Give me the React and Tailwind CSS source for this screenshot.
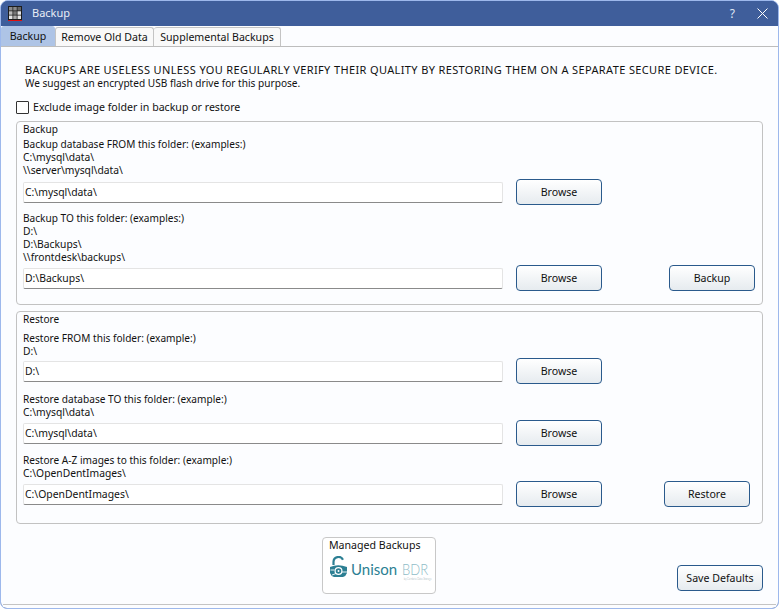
const font = { fontFamily: '"Noto Sans", "Liberation Sans", sans-serif' };

function Btn({ children, className = "" }) {
  return (
    <div className={"h-[26px] pt-[1px] flex items-center justify-center rounded-[4px] border border-[#2a5a8c] bg-gradient-to-b from-[#ffffff] to-[#e6ebef] text-[10.6px] text-[#111] shrink-0 " + className}>
      {children}
    </div>
  );
}

function PathRow({ value, top = "", right = null }) {
  return (
    <div className={"flex items-center h-[26px] pl-[6px] " + top}>
      <div className="w-[480px] h-[21px] flex items-center pl-[1px] bg-white border border-[#e4e4e4] border-b-[#8a8a8a] rounded-[2px] text-[10.4px] leading-[13px] text-[#111]">
        {value}
      </div>
      <Btn className="w-[86px] ml-[13px]">Browse</Btn>
      {right}
    </div>
  );
}

function Lines({ lines, className = "" }) {
  return (
    <div className={"pl-[6px] text-[10.3px] leading-[13px] text-[#111] " + className}>
      {lines.map((l) => (
        <div key={l} className="h-[13px] whitespace-nowrap first:text-[10.1px]">{l}</div>
      ))}
    </div>
  );
}

function Logo() {
  return (
    <div className="flex items-end mt-[4px] ml-[6px]">
      <svg width="19" height="22" viewBox="0 0 19 22" className="shrink-0">
        <path d="M4.5 9V6a5 5 0 0 1 9.5-2.2" fill="none" stroke="#2c7f93" strokeWidth="2.2" />
        <path d="M1 11q8-3.5 17 0v6q-1 3-4 4H5q-3-1-4-4z" fill="#2c7f93" />
        <circle cx="9.5" cy="15" r="3.4" fill="none" stroke="#ffffff" strokeWidth="1.2" />
        <circle cx="9.5" cy="15" r="1" fill="#ffffff" />
        <path d="M1.5 14h4M13 16h5M3 19l4-1.5" stroke="#ffffff" strokeWidth="0.9" fill="none" />
      </svg>
      <span className="ml-[3px] mb-[2px] text-[15px] leading-[14px] text-[#2c7f93] whitespace-nowrap" style={{ fontFamily: '"Lato", sans-serif' }}>Unison</span>
      <span className="ml-[5px] mb-[2px] w-[27px] inline-block relative origin-left scale-x-[0.87] text-[15px] leading-[14px] text-[#8fbcc7] font-light whitespace-nowrap" style={{ fontFamily: '"Lato", sans-serif' }}>
        BDR
        <span className="absolute left-[2px] top-[15px] text-[3px] leading-[4px] whitespace-nowrap text-[#8fa9b0]">by Cambria Data Storage</span>
      </span>
    </div>
  );
}

export default function App() {
  return (
    <div className="w-[779px] h-[609px] flex flex-col overflow-hidden bg-[#3f5e9b] border border-[#9db8ec] rounded-t-[8px] rounded-b-[7px] text-[10.6px] text-[#111]" style={font}>
      <div className="h-[25px] shrink-0 flex items-center bg-[#3f5e9b] text-white">
        <svg width="14" height="15" viewBox="0 0 14 15" className="ml-[7px] shrink-0">
          <rect width="14" height="15" fill="#1c1c1c" />
          <g fill="#8a8a8a">
            <rect x="1" y="1" width="3.5" height="3.5" /><rect x="5.25" y="1" width="3.5" height="3.5" /><rect x="9.5" y="1" width="3.5" height="3.5" fill="#666" />
          </g>
          <g fill="#e4e4e4">
            <rect x="1" y="5.25" width="3.5" height="3.5" fill="#bbb" /><rect x="5.25" y="5.25" width="3.5" height="3.5" fill="#777" /><rect x="9.5" y="5.25" width="3.5" height="3.5" />
            <rect x="1" y="9.5" width="3.5" height="3.5" /><rect x="5.25" y="9.5" width="3.5" height="3.5" fill="#aaa" /><rect x="9.5" y="9.5" width="3.5" height="3.5" />
          </g>
          <rect y="14" width="14" height="1" fill="#e01010" />
        </svg>
        <span className="ml-[10px] text-[11px] text-[#e8edf6]">Backup</span>
        <span className="ml-auto text-[12px] text-[#dfe7f5]">?</span>
        <svg width="11" height="11" viewBox="0 0 11 11" className="ml-[22px] mr-[10px]">
          <path d="M.5.5l10 10M10.5.5l-10 10" stroke="#fff" strokeWidth="1" fill="none" />
        </svg>
      </div>

      <div className="flex-1 flex flex-col bg-[#fcfdff] min-h-0">
        <div className="h-[21px] shrink-0 flex items-end border-b border-[#bdbdbd]">
          <div className="h-[20px] w-[54px] pt-[1px] flex items-center justify-center rounded-t-[3px] bg-[#aec4e6]">Backup</div>
          <div className="h-[19px] w-[99px] pt-[2px] flex items-center justify-center rounded-t-[3px] border border-b-0 border-[#c4c4c4] bg-[#f9f9f9]">Remove Old Data</div>
          <div className="h-[19px] w-[127px] pt-[2px] flex items-center justify-center rounded-t-[3px] border border-b-0 border-l-0 border-[#c4c4c4] bg-[#f9f9f9]">Supplemental Backups</div>
        </div>

        <div className="pl-[24px] pt-[16px] leading-[14px]">
          <div className="whitespace-nowrap text-[11px] tracking-[0.37px]">BACKUPS ARE USELESS UNLESS YOU REGULARLY VERIFY THEIR QUALITY BY RESTORING THEM ON A SEPARATE SECURE DEVICE.</div>
          <div className="whitespace-nowrap text-[10.1px] -mt-[1px]">We suggest an encrypted USB flash drive for this purpose.</div>
        </div>

        <div className="flex items-center pl-[15px] mt-[10px] h-[14px]">
          <div className="w-[13px] h-[13px] border border-[#333] bg-white rounded-[1px]" />
          <span className="ml-[4px] pt-[1px]">Exclude image folder in backup or restore</span>
        </div>

        <div className="mt-[7px] ml-[15px] w-[747px] h-[184px] shrink-0 border border-[#c2c2c2] rounded-[4px]">
          <Lines lines={["Backup"]} className="mt-[1px]" />
          <Lines lines={["Backup database FROM this folder: (examples:)", "C:\\mysql\\data\\", "\\\\server\\mysql\\data\\"]} className="mt-[2px]" />
          <PathRow value="C:\mysql\data\" top="mt-[2px]" />
          <Lines lines={["Backup TO this folder: (examples:)", "D:\\", "D:\\Backups\\", "\\\\frontdesk\\backups\\"]} className="mt-[7px]" />
          <PathRow value="D:\Backups\" top="mt-[1px]" right={<Btn className="w-[86px] ml-[67px]">Backup</Btn>} />
        </div>

        <div className="mt-[6px] ml-[15px] w-[747px] h-[213px] shrink-0 border border-[#c2c2c2] rounded-[4px]">
          <Lines lines={["Restore"]} className="mt-[1px]" />
          <Lines lines={["Restore FROM this folder: (example:)", "D:\\"]} className="mt-[6px]" />
          <PathRow value="D:\" />
          <Lines lines={["Restore database TO this folder: (example:)", "C:\\mysql\\data\\"]} className="mt-[9px]" />
          <PathRow value="C:\mysql\data\" top="mt-[1px]" />
          <Lines lines={["Restore A-Z images to this folder: (example:)", "C:\\OpenDentImages\\"]} className="mt-[8px]" />
          <PathRow value="C:\OpenDentImages\" top="mt-[1px]" right={<Btn className="w-[86px] ml-[62px]">Restore</Btn>} />
        </div>

        <div className="flex items-start mt-[13px] pl-[321px] pr-[15px]">
          <div className="w-[114px] h-[57px] border border-[#c8c8c8] rounded-[4px] bg-white">
            <div className="pl-[6px] leading-[14px]">Managed Backups</div>
            <Logo />
          </div>
          <Btn className="w-[86px] ml-auto mt-[28px]">Save Defaults</Btn>
        </div>

        <div className="mt-auto mb-[3px] mx-[2px] h-[1px] shrink-0 bg-[#c4c4c4]" />
      </div>
    </div>
  );
}
